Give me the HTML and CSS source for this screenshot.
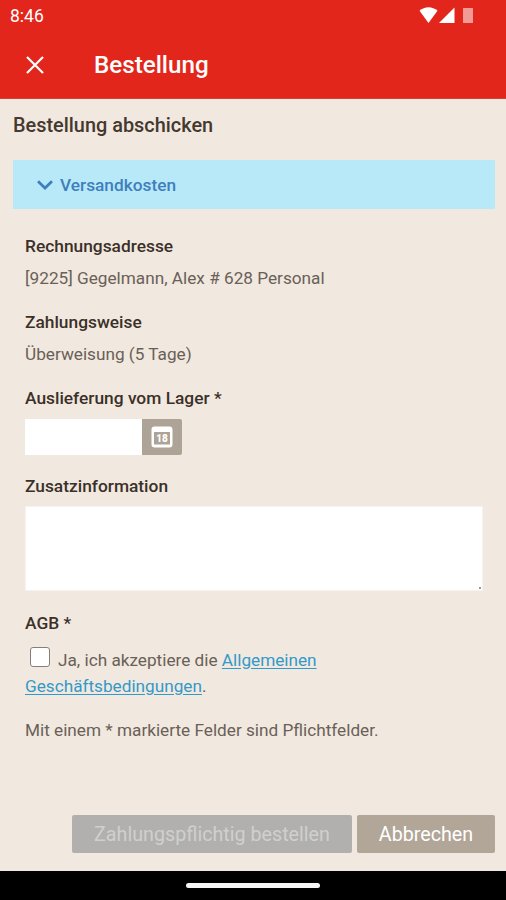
FILE: index.html
```html
<!DOCTYPE html>
<html lang="de">
<head>
  <meta charset="UTF-8">
  <title>Bestellung</title>
  <meta name="viewport" content="width=device-width, initial-scale=1.0">
  <link rel="stylesheet" href="styles.css">
</head>
<body>
  <header>
    <div class="status-bar">
      <span class="clock">8:46</span>
      <svg class="status-icons" width="56" height="18" viewBox="0 0 56 18">
        <path d="M0.5 3.8C5.5 -1 13.5 -1 18.5 3.8L9.5 16Z" fill="#fff"/>
        <path d="M20 16H35.5V0.5Z" fill="#fff"/>
        <rect x="44" y="1" width="10" height="15" fill="#f29a96"/>
      </svg>
    </div>
    <div class="app-bar">
      <button class="close" aria-label="Schließen">
        <svg width="18" height="18" viewBox="0 0 18 18">
          <path d="M1 1L17 17M17 1L1 17" stroke="#fff" stroke-width="2.2" fill="none"/>
        </svg>
      </button>
      <h1>Bestellung</h1>
    </div>
  </header>

  <main>
    <h2>Bestellung abschicken</h2>
    <div class="shipping">
      <svg width="16" height="10" viewBox="0 0 16 10">
        <path d="M1 1.2L8 8L15 1.2" stroke="#3f7fbd" stroke-width="2.7" fill="none"/>
      </svg>
      <span>Versandkosten</span>
    </div>

    <form>
      <div class="field">
        <h3>Rechnungsadresse</h3>
        <p>[9225] Gegelmann, Alex # 628 Personal</p>
      </div>
      <div class="field">
        <h3>Zahlungsweise</h3>
        <p>Überweisung (5 Tage)</p>
      </div>
      <div class="field">
        <h3><label for="date">Auslieferung vom Lager *</label></h3>
        <div class="date-group">
          <input type="text" id="date">
          <button type="button" class="calendar" aria-label="Datum wählen">
            <svg width="22" height="22" viewBox="0 0 22 22">
              <rect x="0.5" y="0.5" width="21" height="21" rx="3" fill="#fff"/>
              <rect x="3" y="6" width="16" height="12.5" fill="#aea397"/>
              <text x="11" y="16" text-anchor="middle">18</text>
            </svg>
          </button>
        </div>
      </div>
      <div class="field">
        <h3><label for="info">Zusatzinformation</label></h3>
        <div class="textarea-wrap">
          <textarea id="info"></textarea>
          <span class="grip"></span>
        </div>
      </div>
      <div class="field terms">
        <h3>AGB *</h3>
        <p><input type="checkbox" id="agb"><label for="agb">Ja, ich akzeptiere die</label> <a href="#">Allgemeinen<br>Geschäftsbedingungen</a>.</p>
      </div>
      <p>Mit einem * markierte Felder sind Pflichtfelder.</p>
    </form>

    <div class="actions">
      <button class="submit" disabled>Zahlungspflichtig bestellen</button>
      <button class="cancel">Abbrechen</button>
    </div>
  </main>

  <footer><div class="home-bar"></div></footer>
</body>
</html>
```

FILE: styles.css
```css
* { margin: 0; padding: 0; box-sizing: border-box; }
body {
  display: flex;
  flex-direction: column;
  height: 100vh;
  overflow: hidden;
  font-family: Roboto, sans-serif;
  font-size: 17.2px;
  line-height: 26px;
  background: #f1e9df;
  color: #6a6058;
}
button { border: none; font-family: inherit; }
svg { display: block; }

/* Header */
header {
  height: 99px;
  background: #e3261b;
  border-bottom: 1px solid #d2433a;
  color: #fff;
}
.status-bar {
  display: flex;
  justify-content: space-between;
  align-items: center;
  height: 32px;
  padding: 0 31px 0 10px;
}
.clock { font-size: 17.5px; }
.status-icons { margin-top: -1px; }
.app-bar {
  display: flex;
  align-items: center;
  height: 65px;
  padding-left: 26px;
}
.close { background: none; }
h1 {
  margin-left: 50px;
  font-size: 24.2px;
  font-weight: 500;
}

/* Content */
main {
  flex: 1;
  display: flex;
  flex-direction: column;
  padding: 14px 11px 18px 13px;
}
h2 {
  font-size: 19.9px;
  font-weight: 500;
  color: #45382f;
}
.shipping {
  display: flex;
  align-items: center;
  gap: 7px;
  height: 49px;
  margin-top: 21px;
  padding-left: 24px;
  background: #b8e9f8;
  color: #3f7fbd;
  font-size: 17.3px;
  font-weight: 500;
}

/* Form */
form { padding: 24px 12px 0; }
.field { margin-bottom: 18px; }
h3 {
  margin-bottom: 6px;
  font-size: 17.35px;
  font-weight: 500;
  color: #3b3029;
}
.date-group {
  display: flex;
  height: 36px;
  margin-top: 8px;
}
.date-group input {
  width: 117px;
  border: none;
  background: #fff;
}
.calendar {
  display: flex;
  align-items: center;
  justify-content: center;
  width: 40px;
  border-radius: 0 2px 2px 0;
  background: #aea397;
}
.calendar text {
  font-size: 10px;
  font-weight: 900;
  fill: #fff;
}
.textarea-wrap { position: relative; margin-top: 7px; }
textarea {
  display: block;
  width: 100%;
  height: 85px;
  border: 1px solid #f5f2ef;
  background: #fff;
  resize: none;
}
.grip {
  position: absolute;
  right: 2px;
  bottom: 2px;
  width: 2px;
  height: 2px;
  background: #999;
}
.terms { margin-top: 19px; }
.terms h3 { margin-bottom: 11px; }
.terms input {
  appearance: none;
  width: 20px;
  height: 20px;
  margin: 0 8px 0 5px;
  border: 1px solid #85807b;
  border-radius: 3px;
  background: #fff;
  vertical-align: -1px;
}
a { color: #3399c9; text-underline-offset: 2px; }

/* Bottom buttons */
.actions {
  display: flex;
  justify-content: flex-end;
  gap: 5px;
  margin-top: auto;
}
.actions button {
  height: 38px;
  border-radius: 2px;
  font-size: 19.7px;
}
.submit { width: 280px; background: #b1b0af; color: #d0cfce; }
.cancel { width: 138px; background: #b1a698; color: #fff; }

footer {
  display: flex;
  justify-content: center;
  height: 29px;
  padding-top: 12px;
  background: #000;
}
.home-bar {
  width: 134px;
  height: 5px;
  border-radius: 3px;
  background: #f5f5f5;
}
```
